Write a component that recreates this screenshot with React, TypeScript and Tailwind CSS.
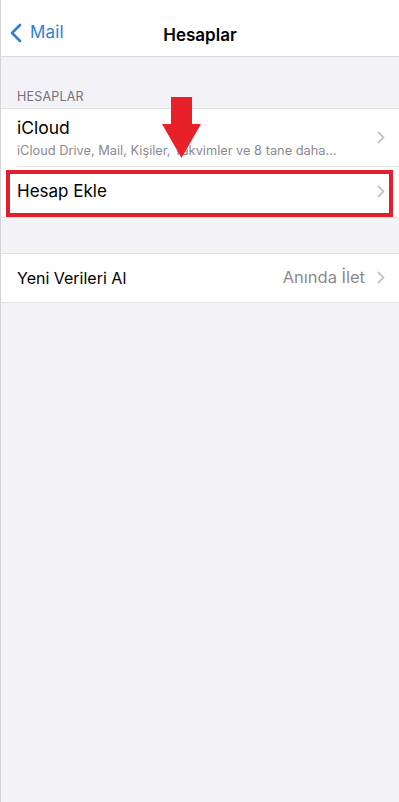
import React from "react";

const Chevron = () => (
  <svg width="8" height="13" viewBox="0 0 8 13" fill="none" className="shrink-0">
    <path d="M1.5 1.5L6.5 6.5L1.5 11.5" stroke="#c4c4c8" strokeWidth="1.8" strokeLinecap="round" strokeLinejoin="round" />
  </svg>
);

const App = () => {
  return (
    <div
      className="relative w-[399px] h-[802px] bg-[#f2f2f7] border-l border-[#d4d4d8] overflow-hidden"
      style={{ fontFamily: "Inter, 'Liberation Sans', sans-serif" }}
    >
      {/* nav bar */}
      <div className="h-[57px] bg-white border-b border-[#d8d8dc] flex items-center relative">
        <div className="flex items-center gap-[8px] pl-[9px] pt-[10px] text-[#2f7fd4]">
          <svg width="12" height="20" viewBox="0 0 12 20" fill="none">
            <path d="M10 2L2 10L10 18" stroke="#2f7fd4" strokeWidth="2.6" strokeLinecap="round" strokeLinejoin="round" />
          </svg>
          <span className="text-[17px] tracking-[0.2px]">Mail</span>
        </div>
        <div className="absolute inset-x-0 top-[23px] text-center text-[17px] font-semibold text-black">Hesaplar</div>
      </div>

      <div className="pt-[31px] pl-[16px] pb-[1px] text-[12.5px] text-[#737378] tracking-[0.2px]">HESAPLAR</div>

      <div className="bg-white border-y border-[#e2e2e6]">
        <div className="flex items-center pl-[16px] pr-[14px] h-[57px]">
          <div className="flex-1 flex flex-col pt-[3px]">
            <span className="text-[17.5px] text-black leading-[22px]">iCloud</span>
            <span className="text-[12.8px] text-[#8a8a8e] leading-[18px] mt-[3px]">
              iCloud Drive, Mail, Kişiler, Takvimler ve 8 tane daha...
            </span>
          </div>
          <Chevron />
        </div>
        <div className="ml-[16px] border-t border-[#e2e2e6]" />
        <div className="flex items-center pl-[16px] pr-[14px] h-[50px]">
          <span className="flex-1 text-[17px] text-black">Hesap Ekle</span>
          <Chevron />
        </div>
      </div>

      <div className="mt-[35px] bg-white border-y border-[#e2e2e6] flex items-center pl-[16px] pr-[14px] h-[50px]">
        <span className="flex-1 text-[16px] text-black">Yeni Verileri Al</span>
        <span className="text-[16.5px] text-[#8a8a8e] mr-[12px]">Anında İlet</span>
        <Chevron />
      </div>

      {/* highlight box */}
      <div className="absolute left-[5px] top-[170px] w-[387px] h-[47px] border-[4px] border-[#e0202c]" />

      {/* red arrow */}
      <svg className="absolute left-[160px] top-[96px]" width="41" height="63" viewBox="0 0 41 63">
        <path d="M10 1H31V28H40L20.5 62L1 28H10Z" fill="#e8202a" />
      </svg>
    </div>
  );
};

export default App;
